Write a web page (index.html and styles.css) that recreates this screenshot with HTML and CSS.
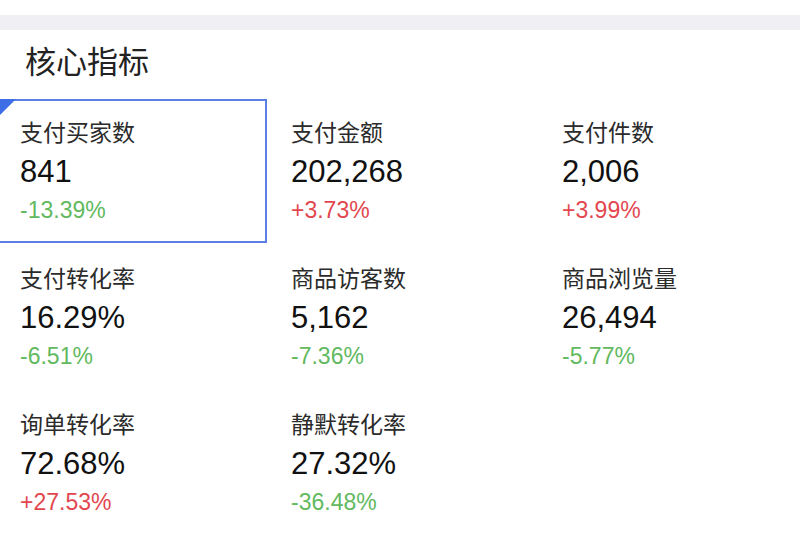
FILE: index.html
```html
<!DOCTYPE html>
<html lang="zh-CN">
<head>
<meta charset="utf-8">
<link rel="stylesheet" href="styles.css">
</head>
<body>
<div class="topgap"></div>
<div class="band"></div>
<section class="panel">
  <h2 class="title">核心指标</h2>
  <div class="grid">
    <div class="cell active">
      <div class="label">支付买家数</div>
      <div class="value">841</div>
      <div class="delta down">-13.39%</div>
    </div>
    <div class="cell">
      <div class="label">支付金额</div>
      <div class="value">202,268</div>
      <div class="delta up">+3.73%</div>
    </div>
    <div class="cell">
      <div class="label">支付件数</div>
      <div class="value">2,006</div>
      <div class="delta up">+3.99%</div>
    </div>
    <div class="cell">
      <div class="label">支付转化率</div>
      <div class="value">16.29%</div>
      <div class="delta down">-6.51%</div>
    </div>
    <div class="cell">
      <div class="label">商品访客数</div>
      <div class="value">5,162</div>
      <div class="delta down">-7.36%</div>
    </div>
    <div class="cell">
      <div class="label">商品浏览量</div>
      <div class="value">26,494</div>
      <div class="delta down">-5.77%</div>
    </div>
    <div class="cell">
      <div class="label">询单转化率</div>
      <div class="value">72.68%</div>
      <div class="delta up">+27.53%</div>
    </div>
    <div class="cell">
      <div class="label">静默转化率</div>
      <div class="value">27.32%</div>
      <div class="delta down">-36.48%</div>
    </div>
  </div>
</section>
</body>
</html>
```
FILE: styles.css
```css
html, body {
  margin: 0;
  padding: 0;
  background: #ffffff;
  overflow: hidden;
}
body {
  width: 800px;
  height: 538px;
  font-family: "Liberation Sans", "Noto Sans CJK SC", sans-serif;
}
.topgap {
  height: 15px;
  background: #ffffff;
}
.band {
  height: 15px;
  background: #efeff4;
}
.panel {
  background: #ffffff;
}
.title {
  margin: 0;
  padding: 13px 0 0 25px;
  height: 69px;
  box-sizing: border-box;
  font-family: "Noto Sans CJK SC", sans-serif;
  font-weight: 400;
  font-size: 31px;
  line-height: 34px;
  color: #222222;
}
.grid {
  margin-left: -4px;
  display: grid;
  grid-template-columns: 271px 271px 271px;
  grid-auto-rows: 146px;
}
.cell {
  position: relative;
  box-sizing: border-box;
  padding: 17px 0 0 22px;
  border: 2px solid transparent;
}
.cell.active {
  border-color: #5b7fe3;
  height: 144px;
}
.cell.active::before {
  content: "";
  position: absolute;
  top: -2px;
  left: -2px;
  width: 0;
  height: 0;
  border-top: 20px solid #3d6ee6;
  border-right: 20px solid transparent;
}
.label {
  font-family: "Noto Sans CJK SC", sans-serif;
  font-size: 23px;
  line-height: 26px;
  color: #2b2b2b;
}
.value {
  margin-top: 12px;
  font-size: 31px;
  line-height: 32px;
  color: #111111;
}
.delta {
  margin-top: 10px;
  font-size: 23px;
  line-height: 24px;
}
.delta.down {
  color: #62b95f;
}
.delta.up {
  color: #e2474f;
}
```
